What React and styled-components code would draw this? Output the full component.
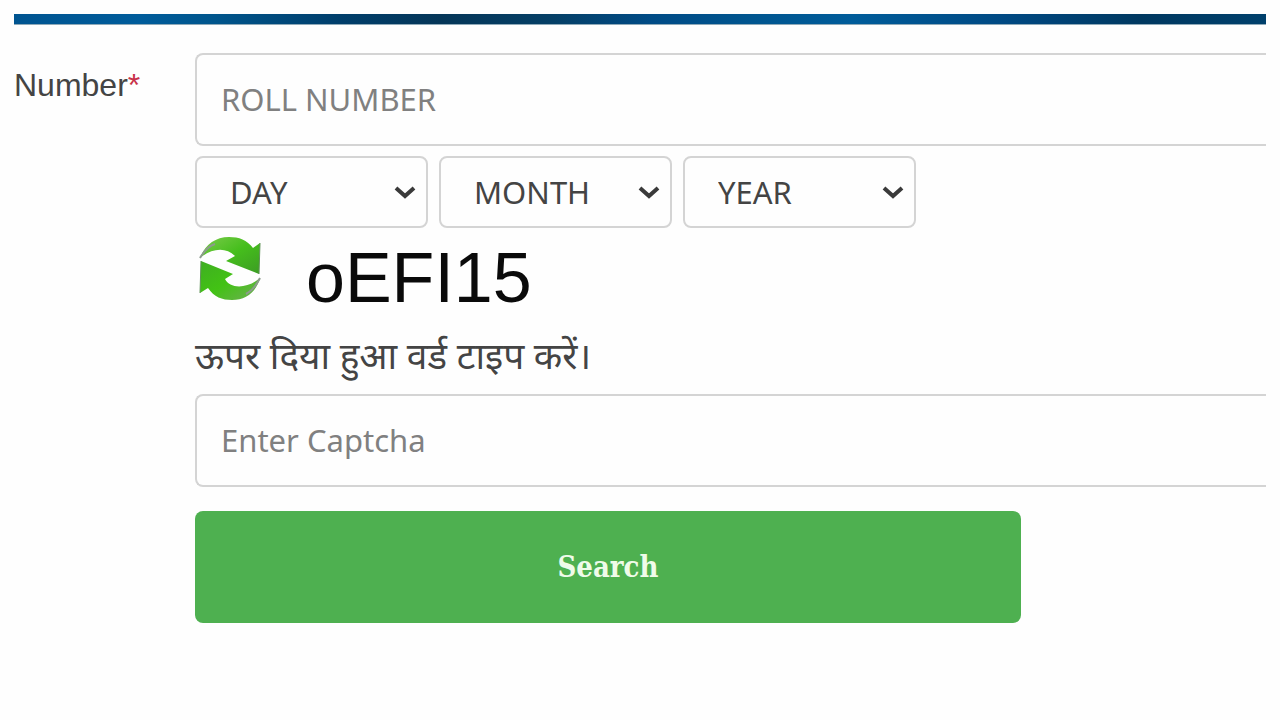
import React from "react";
import styled, { createGlobalStyle } from "styled-components";

const GlobalStyle = createGlobalStyle`
  *, *::before, *::after { box-sizing: border-box; }
  body {
    margin: 0;
    background: #fefefe;
    color: #444;
    font-family: "Liberation Sans", Arial, sans-serif;
  }
`;

const Page = styled.main`
  padding: 14px;
`;

const TopBar = styled.div`
  height: 11px;
  border-bottom: 1px solid #8fa9b8;
  background: linear-gradient(
    90deg,
    #005490 0%,
    #005c9b 10%,
    #00558c 16%,
    #003e6b 26%,
    #053658 34%,
    #053f66 43%,
    #004b86 51%,
    #00558f 59%,
    #005c9a 67%,
    #004983 79%,
    #003860 90%,
    #00406c 100%
  );
`;

const Form = styled.form`
  display: flex;
  padding-top: 28px;
`;

const FieldLabel = styled.label`
  flex: 0 0 181px;
  padding-top: 14px;
  font-size: 32px;
  line-height: 36px;
`;

const Required = styled.span`
  color: #c8324a;
`;

const Fields = styled.div`
  flex: 1;
  min-width: 0;
  display: flex;
  flex-direction: column;
`;

const TextInput = styled.input`
  width: 100%;
  height: 93px;
  padding: 0 24px 2px;
  border: 2px solid #d4d4d4;
  border-right: 0;
  border-radius: 8px 0 0 8px;
  background: #fefefe;
  color: #444;
  font-family: "Noto Sans", sans-serif;
  font-size: 31px;
  outline: none;

  &::placeholder {
    color: #808080;
    opacity: 1;
  }
`;

const DateRow = styled.div`
  display: flex;
  flex-wrap: wrap;
  gap: 11px;
  margin-top: 10px;
`;

const SelectBox = styled.div`
  display: grid;
  align-items: center;
  width: 233px;

  > * { grid-area: 1 / 1; }
`;

const Select = styled.select`
  appearance: none;
  width: 100%;
  height: 72px;
  padding: 0 48px 0 33px;
  border: 2px solid #d4d4d4;
  border-radius: 8px;
  background: #fefefe;
  color: #444;
  font-family: "Noto Sans", sans-serif;
  font-size: 31px;
`;

const Chevron = styled.svg`
  justify-self: end;
  width: 22px;
  height: 16px;
  margin-right: 12px;
  pointer-events: none;
`;

const CaptchaRow = styled.div`
  display: flex;
  align-items: flex-start;
  gap: 43px;
  padding: 9px 0 11px;
`;

const RefreshButton = styled.button`
  width: 68px;
  height: 64px;
  padding: 0;
  border: 0;
  background: none;
  cursor: pointer;

  svg { display: block; }
`;

const CaptchaText = styled.span`
  color: #0a0a0a;
  font-size: 70px;
  line-height: 82px;
`;

const Hint = styled.label`
  font-family: "Noto Sans Devanagari", "Noto Sans", sans-serif;
  font-size: 37px;
  line-height: 60px;
  padding-bottom: 4px;
`;

const SubmitButton = styled.button`
  width: 100%;
  max-width: 826px;
  height: 112px;
  margin-top: 24px;
  border: 0;
  border-radius: 8px;
  background: #4eb050;
  color: #effbe9;
  font-family: "DejaVu Serif Condensed", "DejaVu Serif", serif;
  font-size: 29px;
  font-weight: 700;
  cursor: pointer;
`;

function RefreshIcon() {
  return (
    <svg width="68" height="64" viewBox="0 6 68 64" aria-hidden="true">
      <defs>
        <linearGradient id="leafTop" x1="0" y1="0" x2="1" y2="1">
          <stop offset="0" stopColor="#7ccb4c" />
          <stop offset="0.5" stopColor="#45be1c" />
          <stop offset="1" stopColor="#3c9c24" />
        </linearGradient>
        <linearGradient id="leafBottom" x1="0" y1="0" x2="1" y2="1">
          <stop offset="0" stopColor="#3fae22" />
          <stop offset="0.5" stopColor="#42c214" />
          <stop offset="1" stopColor="#6fae55" />
        </linearGradient>
      </defs>
      <path
        d="M5 27C10 14 20 6 34 6C44 6 52 9 58 17L65 12L64 43L31 30L40 25C31 16 17 17 5 27Z"
        fill="url(#leafTop)"
      />
      <path d="M5 27C9 20 14 15 20 13" fill="none" stroke="#8d9b8d" strokeWidth="2" />
      <path d="M65 12L64 43" fill="none" stroke="#5f9257" strokeWidth="1" />
      <path
        d="M65 47C61 61 51 69 37 69C27 69 19 66 13 57L5 62L6 30L38 43L30 48C35 58 52 58 65 47Z"
        fill="url(#leafBottom)"
      />
      <path d="M65 47C61 55 57 60 51 63" fill="none" stroke="#8d9b8d" strokeWidth="2" />
      <path d="M5 62L6 30" fill="none" stroke="#5f9257" strokeWidth="1" />
    </svg>
  );
}

function DateSelect({ name }) {
  return (
    <SelectBox>
      <Select aria-label={name} defaultValue="">
        <option value="">{name}</option>
      </Select>
      <Chevron viewBox="0 0 22 16" aria-hidden="true">
        <path d="M2 4L11 12L20 4" fill="none" stroke="#3a3a3a" strokeWidth="4" />
      </Chevron>
    </SelectBox>
  );
}

export default function App() {
  return (
    <>
      <GlobalStyle />
      <Page>
        <TopBar />
        <Form onSubmit={(event) => event.preventDefault()}>
          <FieldLabel htmlFor="roll">
            Number<Required>*</Required>
          </FieldLabel>
          <Fields>
            <TextInput id="roll" type="text" placeholder="ROLL NUMBER" />
            <DateRow>
              <DateSelect name="DAY" />
              <DateSelect name="MONTH" />
              <DateSelect name="YEAR" />
            </DateRow>
            <CaptchaRow>
              <RefreshButton type="button" aria-label="Refresh captcha">
                <RefreshIcon />
              </RefreshButton>
              <CaptchaText>oEFI15</CaptchaText>
            </CaptchaRow>
            <Hint htmlFor="captcha">ऊपर दिया हुआ वर्ड टाइप करें।</Hint>
            <TextInput id="captcha" type="text" placeholder="Enter Captcha" />
            <SubmitButton type="submit">Search</SubmitButton>
          </Fields>
        </Form>
      </Page>
    </>
  );
}
